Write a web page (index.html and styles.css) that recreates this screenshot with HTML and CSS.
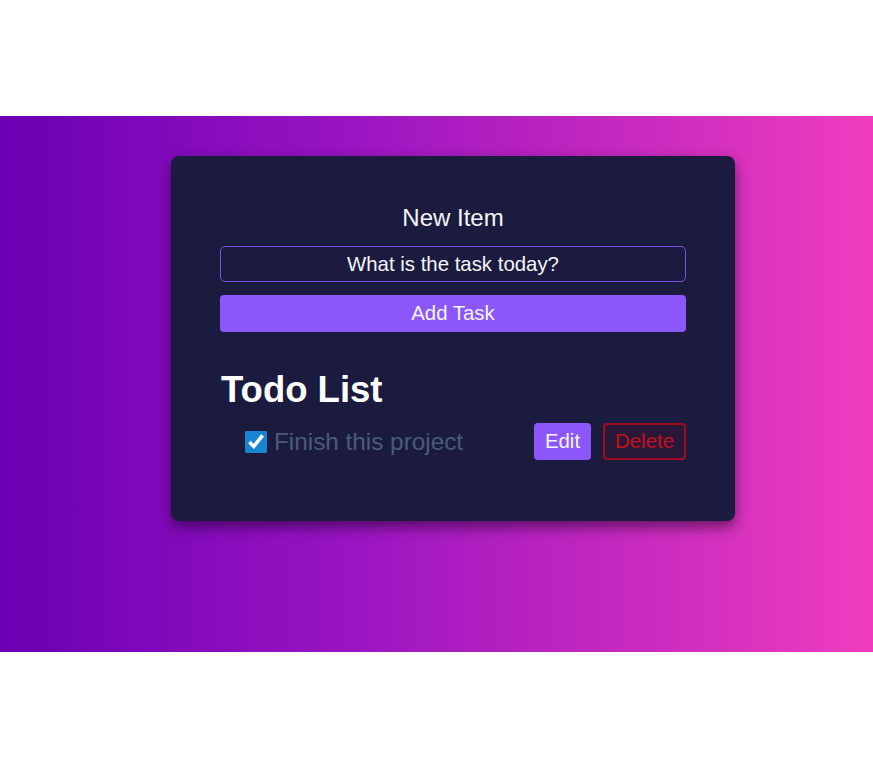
FILE: index.html
```html
<!DOCTYPE html>
<html lang="en">
<head>
<meta charset="utf-8">
<title>Todo</title>
<link rel="stylesheet" href="styles.css">
</head>
<body>
<main class="band">
  <section class="card">
    <form class="new-item">
      <label class="new-label" for="task">New Item</label>
      <input id="task" class="task-input" type="text" value="What is the task today?">
      <button type="button" class="add-btn">Add Task</button>
    </form>
    <h1 class="title">Todo List</h1>
    <ul class="list">
      <li class="item">
        <label class="item-label">
          <input type="checkbox" class="check" checked>
          <span class="item-text">Finish this project</span>
        </label>
        <button type="button" class="edit-btn">Edit</button>
        <button type="button" class="delete-btn">Delete</button>
      </li>
    </ul>
  </section>
</main>
</body>
</html>
```
FILE: styles.css
```css
html, body {
  margin: 0;
  padding: 0;
  background: #ffffff;
  font-family: "Liberation Sans", Arial, sans-serif;
}
body {
  padding-top: 116px;
  height: 768px;
  box-sizing: border-box;
}
.band {
  height: 536px;
  background: linear-gradient(to right, #6a00b4 0%, #9a14c2 40%, #d22fbe 80%, #f03dc0 100%);
  padding: 40px 0 0 171px;
  box-sizing: border-box;
}
.card {
  width: 564px;
  box-sizing: border-box;
  background: #1b1b40;
  border-radius: 8px;
  box-shadow: 0 6px 14px rgba(20, 0, 30, 0.55);
  padding: 48px 49px 61px 49px;
  color: #f5f5f5;
}
.new-item {
  display: flex;
  flex-direction: column;
  margin: 0;
}
.new-label {
  text-align: center;
  font-size: 24px;
  line-height: 28px;
  margin-bottom: 14px;
}
.task-input {
  height: 36px;
  box-sizing: border-box;
  background: transparent;
  border: 1.5px solid #7a52e0;
  border-radius: 5px;
  color: #f5f5f5;
  font-family: inherit;
  font-size: 20.4px;
  text-align: center;
  padding: 0;
  margin: 0 0 13px 0;
  outline: none;
}
.add-btn {
  height: 37px;
  border: none;
  border-radius: 4px;
  background: #8b57fb;
  color: #f5f5f5;
  font-family: inherit;
  font-size: 20.4px;
  padding: 0;
}
.title {
  margin: 37px 0 12px 1px;
  font-size: 36.5px;
  line-height: 42px;
  font-weight: bold;
  color: #ffffff;
}
.list {
  list-style: none;
  margin: 0;
  padding: 0;
}
.item {
  display: flex;
  align-items: center;
  height: 37px;
  padding-left: 25px;
}
.item-label {
  display: flex;
  align-items: center;
  flex: 1;
}
.check {
  width: 22px;
  height: 22px;
  margin: 0 7px 0 0;
  accent-color: #1786d2;
}
.item-text {
  font-size: 24.3px;
  color: #4a5b76;
}
.edit-btn {
  height: 37px;
  box-sizing: border-box;
  border: none;
  border-radius: 4px;
  background: #8b57fb;
  color: #f5f5f5;
  font-family: inherit;
  font-size: 20.4px;
  padding: 0 11px;
  margin-right: 12px;
}
.delete-btn {
  height: 37px;
  box-sizing: border-box;
  border: 2px solid #9c0e1f;
  border-radius: 4px;
  background: #2a1838;
  color: #c0101f;
  font-family: inherit;
  font-size: 20.4px;
  padding: 0 10px;
}
```
